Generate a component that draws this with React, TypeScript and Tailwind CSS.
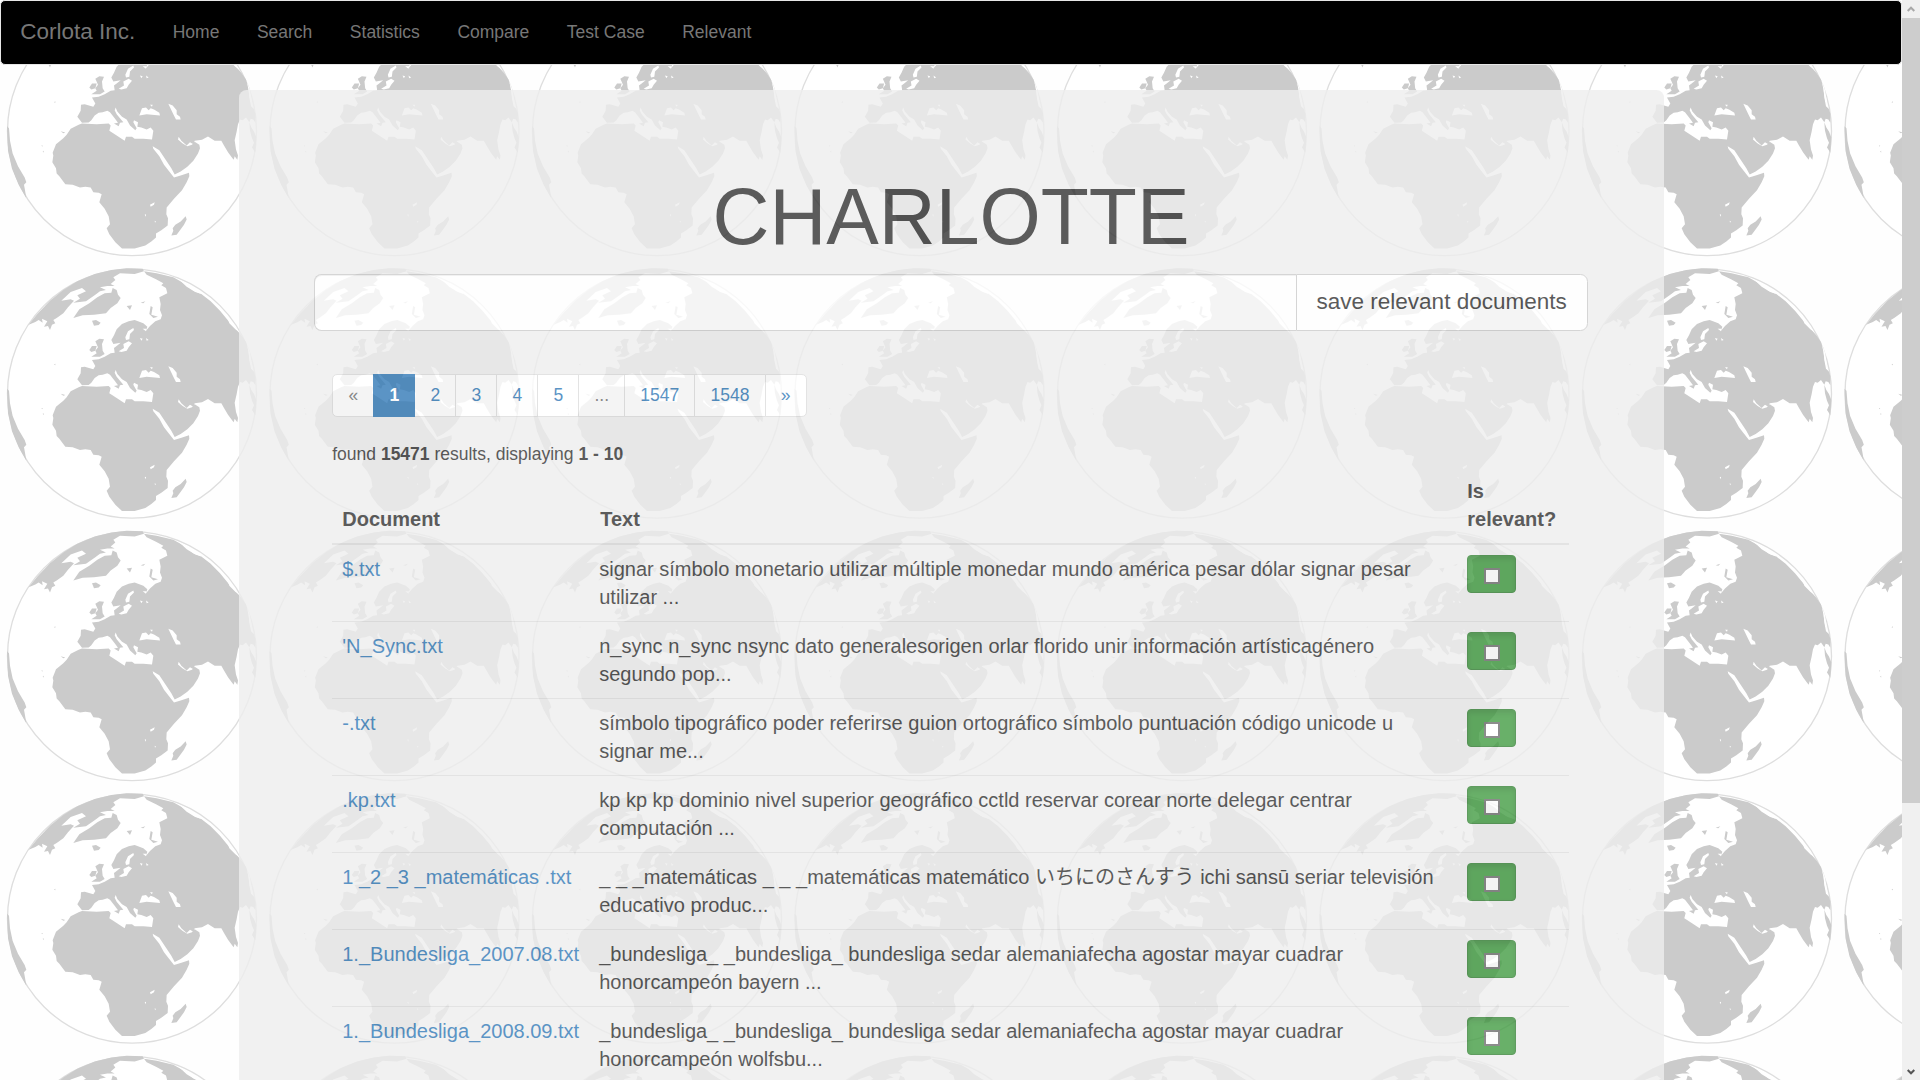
import React from "react";

const NAV_ITEMS = ["Home", "Search", "Statistics", "Compare", "Test Case", "Relevant"];

const PAGES = ["«", "1", "2", "3", "4", "5", "...", "1547", "1548", "»"];

const DOCUMENTS = [
  {
    name: "$.txt",
    text: "signar símbolo monetario utilizar múltiple monedar mundo américa pesar dólar signar pesar\nutilizar ...",
  },
  {
    name: "'N_Sync.txt",
    text: "n_sync n_sync nsync dato generalesorigen orlar florido unir información artísticagénero\nsegundo pop...",
  },
  {
    name: "-.txt",
    text: "símbolo tipográfico poder referirse guion ortográfico símbolo puntuación código unicode u\nsignar me...",
  },
  {
    name: ".kp.txt",
    text: "kp kp kp dominio nivel superior geográfico cctld reservar corear norte delegar centrar\ncomputación ...",
  },
  {
    name: "1 _2 _3 _matemáticas .txt",
    text: "_ _ _matemáticas _ _ _matemáticas matemático いちにのさんすう ichi sansū seriar televisión\neducativo produc...",
  },
  {
    name: "1._Bundesliga_2007.08.txt",
    text: "_bundesliga_ _bundesliga_ bundesliga sedar alemaniafecha agostar mayar cuadrar\nhonorcampeón bayern ...",
  },
  {
    name: "1._Bundesliga_2008.09.txt",
    text: "_bundesliga_ _bundesliga_ bundesliga sedar alemaniafecha agostar mayar cuadrar\nhonorcampeón wolfsbu...",
  },
];

const TILE = 262.5;

/* One globe, drawn at three times its size on the page. */
function Globe() {
  return (
    <g id="globe" transform="translate(0 -2.5) scale(0.33333)">
      <circle cx="396" cy="401" r="373.5" fill="#fff" stroke="#dedede" strokeWidth="4" />
      <g fill="#cbcbcb">
        {/* Europe, Asia and Africa */}
        <path d="M432 34 L470 40 L520 52 L556 72 L580 92 L604 102 L632 124 L660 152 L686 184 L708 208 L724 226 L738 246 L745 270 L748 300 L753 326 L761 334 L766 348 L766 376 L760 366 L752 364 L748 374 L738 360 L728 368 L720 366 L714 380 L710 402 L704 428 L708 456 L714 474 L712 487 L704 476 L701 487 L694 478 L684 464 L672 444 L664 430 L644 430 L624 417 L606 427 L584 430 L580 440 L570 434 L560 444 L544 430 L536 418 L534 426 L548 438 L562 446 L576 442 L584 433 L598 442 L600 452 L594 468 L580 490 L562 508 L542 522 L524 531 L514 512 L498 488 L478 458 L458 446 L460 454 L478 476 L492 502 L506 520 L522 540 L542 534 L567 526 L568 536 L560 554 L546 578 L522 604 L500 630 L499 650 L504 662 L503 684 L484 698 L468 708 L468 720 L454 732 L436 744 L404 753 L366 753 L346 734 L328 710 L320 692 L330 680 L326 656 L314 634 L298 614 L305 590 L296 586 L280 584 L272 570 L256 568 L240 570 L218 562 L196 560 L178 536 L170 528 L168 512 L157 494 L160 474 L158 466 L168 440 L190 422 L200 412 L212 394 L236 382 L246 378 L290 380 L326 378 L332 384 L328 400 L350 414 L374 430 L378 418 L396 418 L404 424 L430 424 L456 426 L460 400 L452 390 L440 396 L424 390 L412 388 L414 374 L402 368 L400 374 L410 392 L406 398 L390 384 L380 366 L366 358 L352 342 L347 330 L344 338 L350 350 L370 374 L360 376 L356 386 L342 378 L354 376 L344 362 L330 344 L322 340 L308 344 L296 346 L284 354 L274 368 L266 375 L246 376 L232 358 L242 340 L243 322 L254 320 L280 328 L286 318 L276 300 L296 298 L314 290 L332 280 L344 278 L342 264 L350 258 L362 248 L340 252 L334 240 L342 226 L350 208 L366 192 L386 184 L404 180 L430 190 L442 200 L438 212 L450 198 L466 184 L482 178 L486 166 L480 150 L482 132 L478 112 L502 100 L498 84 L484 76 L490 70 L468 58 L440 44 Z" />
        {/* Arctic Canada */}
        <path d="M86 194 L112 162 L150 122 L190 90 L232 64 L284 42 L334 30 L380 25 L428 26 L432 34 L404 42 L360 40 L340 52 L346 60 L332 72 L344 78 L322 78 L300 82 L318 90 L300 94 L286 104 L258 124 L220 128 L240 116 L232 106 L258 94 L246 84 L212 96 L184 122 L212 118 L222 122 L204 142 L190 160 L170 174 L160 180 L166 190 L156 194 L150 210 L144 198 L132 200 L142 184 L126 176 L128 188 L116 180 L106 186 Z" />
        {/* Greenland */}
        <path d="M220 174 L238 148 L268 130 L292 112 L314 100 L334 98 L338 84 L350 90 L354 104 L362 114 L352 130 L332 144 L318 160 L282 164 L248 166 Z" />
        <path d="M276 182 L288 180 L302 188 L296 195 L282 197 Z" />
        {/* British Isles */}
        <path d="M286 244 L298 236 L312 238 L306 252 L308 272 L314 282 L300 290 L274 290 L290 280 L286 272 L294 262 Z" />
        <path d="M268 270 L276 258 L290 258 L286 272 L274 276 Z" />
        {/* Svalbard and Novaya Zemlya */}
        <path d="M380 138 L396 136 L390 150 Z M422 128 L436 124 L430 130 Z M452 138 L458 142 L454 164 L474 170 L460 174 L448 162 Z" />
        {/* Madagascar */}
        <path d="M514 714 L520 700 L518 692 L526 682 L542 672 L557 656 L560 666 L552 682 L540 698 L530 712 Z" />
        {/* South America */}
        <path d="M21 386 L27 392 L30 430 L38 468 L54 506 L74 540 L79 554 L72 562 L75 578 L79 602 L56 562 L36 514 L24 460 Z" />
        {/* Southeast Asia */}
        <path d="M748 374 L754 390 L762 402 L769 420 L766 466 L760 456 L756 450 L762 436 L756 422 L750 400 Z" />
        <path d="M162 314 L166 311 L166 316 Z M124 444 L128 444 L127 448 Z M128 461 L131 460 L131 466 Z M182 401 L196 405 L190 407 Z" />
      </g>
      <g fill="#fff">
        {/* Black Sea, Caspian Sea, Baltic Sea */}
        <path d="M418 354 L426 332 L438 330 L446 338 L452 332 L462 336 L478 346 L480 354 L456 352 L440 350 Z" />
        <path d="M505 319 L518 324 L530 338 L530 350 L540 358 L542 366 L528 366 L520 350 Z" />
        <path d="M356 274 L372 264 L370 252 L386 244 L396 250 L386 262 L380 272 L364 276 Z" />
        <path d="M376 232 L384 214 L400 204 L402 210 L390 222 L388 238 L378 240 Z" />
        <path d="M428 206 L440 206 L438 214 Z M420 234 L428 236 L424 242 Z M438 234 L446 240 L440 242 Z M450 322 L458 322 L456 328 Z" />
        {/* Lake Victoria */}
        <path d="M450 622 L464 614 L462 622 L452 628 Z M434 652 L438 650 L438 658 Z M464 670 L468 672 L465 676 Z" />
        {/* Arctic coast of Siberia */}
        <path d="M536 58 L566 72 L592 90 L604 102 L586 96 L560 80 Z M684 178 L700 192 L718 216 L706 208 L688 190 Z M740 250 L750 278 L757 320 L751 312 L746 280 Z" />
      </g>
    </g>
  );
}

function GlobeBackground() {
  const copies: { x: number; y: number }[] = [];
  for (let row = 0; row < 5; row++) {
    for (let col = 0; col < 8; col++) {
      if (row || col) copies.push({ x: col * TILE, y: row * TILE });
    }
  }
  return (
    <svg className="pointer-events-none absolute inset-0" width="1902" height="1080" aria-hidden="true">
      <Globe />
      {copies.map((c) => (
        <use key={`${c.x}-${c.y}`} href="#globe" x={c.x} y={c.y} />
      ))}
    </svg>
  );
}

function Navbar() {
  return (
    <nav className="mb-[25px] flex h-[64.5px] shrink-0 items-center rounded-[5px] border border-[#e7e7e7] bg-black pl-[0.4px] text-[17.5px] leading-[25px] text-[#777]">
      <a className="px-[18.75px] pb-px text-[22.5px]">Corlota Inc.</a>
      {NAV_ITEMS.map((item) => (
        <a key={item} className="px-[18.75px]">
          {item}
        </a>
      ))}
    </nav>
  );
}

function SearchBar() {
  return (
    <div className="mr-[0.8px] flex h-[57.5px]">
      <input
        className="min-w-0 flex-1 rounded-l-[7.5px] border border-r-0 border-[#ccc] bg-white px-5 shadow-[inset_0_1px_1px_rgba(0,0,0,0.075)] outline-none"
        aria-label="Search"
      />
      <button className="rounded-r-[7.5px] border border-[#ccc] bg-white px-5 text-[22.5px] leading-[30px] text-[#333]">
        save relevant documents
      </button>
    </div>
  );
}

function pageClass(page: string) {
  if (page === "1") return "z-10 border-[#337ab7] bg-[#337ab7] font-bold text-white";
  if (page === "«" || page === "...") return "border-[#ddd] bg-white text-[#777]";
  return "border-[#ddd] bg-white text-[#337ab7]";
}

function Pagination() {
  return (
    <ul className="flex text-[17.5px] leading-[25px]">
      {PAGES.map((page) => (
        <li
          key={page}
          className={`relative -ml-px border px-[15.15px] py-[7.75px] first:ml-0 first:rounded-l-[5px] last:rounded-r-[5px] ${pageClass(page)}`}
        >
          {page}
        </li>
      ))}
    </ul>
  );
}

function ResultsTable() {
  return (
    <table className="w-[1236.5px] table-fixed border-separate border-spacing-0 text-left text-[20px] leading-[28px]">
      <colgroup>
        <col className="w-[257px]" />
        <col className="w-[868px]" />
        <col />
      </colgroup>
      <thead>
        <tr className="align-bottom">
          <th className="border-b-2 border-[#ddd] p-[10px]">Document</th>
          <th className="border-b-2 border-[#ddd] p-[10px] pl-[11px]">Text</th>
          <th className="border-b-2 border-[#ddd] p-[10px]">
            Is
            <br />
            relevant?
          </th>
        </tr>
      </thead>
      <tbody>
        {DOCUMENTS.map((doc) => (
          <tr key={doc.name} className="group align-top">
            <td className="border-t border-[#ddd] p-[10px] whitespace-nowrap text-[#337ab7] group-first:border-t-0">
              {doc.name}
            </td>
            <td className="border-t border-[#ddd] p-[10px] whitespace-pre group-first:border-t-0">{doc.text}</td>
            <td className="border-t border-[#ddd] p-[10px] group-first:border-t-0">
              <label className="flex h-[38px] w-[49px] items-center justify-center rounded-[4px] border border-[#398439] bg-[#449d44] pt-[4px] shadow-[inset_0_3px_5px_rgba(0,0,0,0.125)]">
                <span className="size-4 border-2 border-[#707070] bg-white" />
              </label>
            </td>
          </tr>
        ))}
      </tbody>
    </table>
  );
}

function Scrollbar() {
  return (
    <div className="flex h-full w-[18px] shrink-0 flex-col bg-[#f0f0f0]">
      <div className="flex h-[18px] items-center justify-center">
        <svg width="8" height="6" viewBox="0 0 8 6" fill="none" stroke="#a8a8a8" strokeWidth="2">
          <path d="M0.7 5 L4 1.7 L7.3 5" />
        </svg>
      </div>
      <div className="h-[785px] bg-[#cdcdcd]" />
      <div className="mt-auto flex h-[17px] items-center justify-center">
        <svg width="8" height="6" viewBox="0 0 8 6" fill="none" stroke="#555" strokeWidth="2">
          <path d="M0.7 1 L4 4.3 L7.3 1" />
        </svg>
      </div>
    </div>
  );
}

export default function App() {
  return (
    <div className="flex h-[1080px] w-[1920px] overflow-hidden bg-[#fefefe] font-['Liberation_Sans','Noto_Sans_CJK_JP',sans-serif]">
      <div className="relative h-full w-[1902px] shrink-0 overflow-hidden">
        <GlobeBackground />
        <div className="relative flex flex-col">
          <Navbar />
          <main className="mx-auto w-[1425px] rounded-[7.5px] bg-[#eee] px-[75px] py-[60px] text-[#333] opacity-80">
            <h1 className="mt-[24px] mb-[13.5px] text-center text-[78.75px] leading-[86.6px]">CHARLOTTE</h1>
            <SearchBar />
            <div className="px-[18.75px] pt-[43px]">
              <Pagination />
              <p className="mt-[25.5px] text-[17.5px] leading-[25px]">
                found <b>15471</b> results, displaying <b>1 - 10</b>
              </p>
              <ResultsTable />
            </div>
          </main>
        </div>
      </div>
      <Scrollbar />
    </div>
  );
}
